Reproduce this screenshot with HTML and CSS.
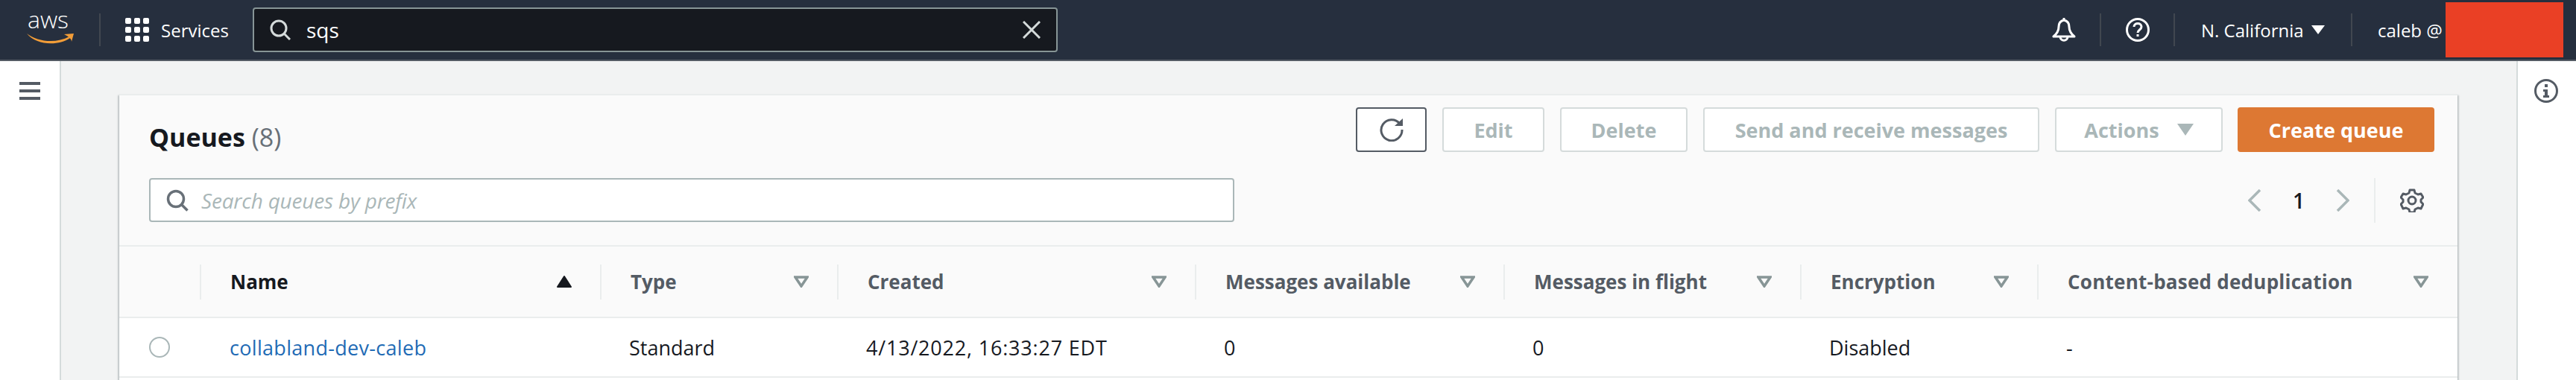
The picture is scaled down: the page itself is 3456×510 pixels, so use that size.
FILE: index.html
```html
<!DOCTYPE html>
<html lang="en">
<head>
    <meta charset="UTF-8">
    <title>Simple Queue Service</title>
    <link rel="stylesheet" href="styles.css">
</head>
<body>
    <header class="topbar">
        <svg class="logo" width="68" height="44" viewBox="0 0 68 44">
            <text x="3" y="20" class="logo-text">aws</text>
            <path d="M2 27C16 38 41 41 59 31L60 33C44 44 15 43 2 27Z" fill="#f29d38"/>
            <path d="M52 28L65 27L62 38C62 35 60 32 52 28Z" fill="#f29d38"/>
        </svg>
        <span class="topbar-sep sep-logo"></span>
        <svg class="services-icon" width="32" height="32" viewBox="0 0 32 32" fill="#fff">
            <rect width="8" height="8" rx="2"/><rect x="12" width="8" height="8" rx="2"/><rect x="24" width="8" height="8" rx="2"/>
            <rect y="12" width="8" height="8" rx="2"/><rect x="12" y="12" width="8" height="8" rx="2"/><rect x="24" y="12" width="8" height="8" rx="2"/>
            <rect y="24" width="8" height="8" rx="2"/><rect x="12" y="24" width="8" height="8" rx="2"/><rect x="24" y="24" width="8" height="8" rx="2"/>
        </svg>
        <span class="services">Services</span>
        <div class="global-search">
            <svg width="28" height="28" viewBox="0 0 28 28" fill="none" stroke="#d5dbdb" stroke-width="3">
                <circle cx="12" cy="12" r="10"/><path d="M19 19l8 8"/>
            </svg>
            <span class="global-query">sqs</span>
            <svg class="clear-icon" width="24" height="24" viewBox="0 0 24 24" fill="none" stroke="#d5dbdb" stroke-width="3">
                <path d="M1 1l22 22M23 1L1 23"/>
            </svg>
        </div>
        <svg class="bell" width="32" height="32" viewBox="0 0 32 32" fill="none" stroke="#fff" stroke-width="3" stroke-linejoin="round">
            <path d="M16 0v3"/>
            <path d="M16 3c-5 1-7 5-7 9 0 5-2 9-7 13h28c-5-4-7-8-7-13 0-4-2-8-7-9z"/>
            <path d="M11 25c0 7 10 7 10 0"/>
        </svg>
        <span class="topbar-sep sep-bell"></span>
        <svg class="help" width="32" height="32" viewBox="0 0 32 32" fill="none" stroke="#fff" stroke-width="3">
            <circle cx="16" cy="16" r="14.5"/>
            <path d="M11 12c0-6 10-6 10 0 0 4-5 4-5 8"/>
            <path d="M16 22v3"/>
        </svg>
        <span class="topbar-sep sep-help"></span>
        <span class="region">N. California</span>
        <span class="region-caret"></span>
        <span class="topbar-sep sep-region"></span>
        <span class="account">caleb @</span>
        <span class="redacted"></span>
    </header>

    <div class="layout">
        <aside class="rail rail-left">
            <span class="burger"><i></i><i></i><i></i></span>
        </aside>

        <main class="content">
            <section class="card">
                <div class="card-top">
                    <div class="title-row">
                        <h2 class="title">Queues <span class="count">(8)</span></h2>
                        <div class="actions">
                            <button class="btn btn-refresh" type="button">
                                <svg width="32" height="32" viewBox="0 0 32 32" fill="none" stroke="#545b64" stroke-width="3">
                                    <path d="M27 8A14 14 0 1 0 30 16"/>
                                    <path d="M31 1v10H20z" fill="#545b64" stroke="none"/>
                                </svg>
                            </button>
                            <button class="btn btn-edit" type="button">Edit</button>
                            <button class="btn btn-delete" type="button">Delete</button>
                            <button class="btn btn-send" type="button">Send and receive messages</button>
                            <button class="btn btn-actions" type="button">Actions <span class="caret"></span></button>
                            <button class="btn btn-create" type="button">Create queue</button>
                        </div>
                    </div>
                    <div class="filter-row">
                        <div class="filter-input">
                            <svg width="30" height="30" viewBox="0 0 30 30" fill="none" stroke="#687078" stroke-width="3.5">
                                <circle cx="13" cy="13" r="10.5"/><path d="M20.5 20.5l8 8"/>
                            </svg>
                            <span class="placeholder">Search queues by prefix</span>
                        </div>
                        <div class="pager">
                            <svg class="chev" width="18" height="30" viewBox="0 0 18 30" fill="none" stroke="#aab7b8" stroke-width="3.5"><path d="M16 1L2 15l14 14"/></svg>
                            <span class="page-num">1</span>
                            <svg class="chev" width="18" height="30" viewBox="0 0 18 30" fill="none" stroke="#aab7b8" stroke-width="3.5"><path d="M2 1l14 14L2 29"/></svg>
                            <span class="pager-sep"></span>
                            <svg width="32" height="32" viewBox="0 0 32 32" fill="none" stroke="#545b64" stroke-width="3" stroke-linejoin="round">
                                <path d="M13 2h6l1 4 4 2 4-1 3 5-3 3v3l3 3-3 6-4-1-4 2-1 4h-6l-1-4-4-2-4 1-3-6 3-3v-3L1 12l3-5 4 1 4-2z"/>
                                <circle cx="16" cy="16" r="5"/>
                            </svg>
                        </div>
                    </div>
                </div>

                <div class="table-head cols">
                    <div class="th-blank"></div>
                    <div class="th th-name"><span>Name</span><svg width="20" height="16" viewBox="0 0 20 16" fill="#16191f" stroke="#16191f" stroke-width="2" stroke-linejoin="round"><path d="M10 1L1 15h18z"/></svg></div>
                    <div class="th"><span>Type</span><svg width="20" height="16" viewBox="0 0 20 16" fill="none" stroke="#879596" stroke-width="3.5"><path d="M2 2h16l-8 12z"/></svg></div>
                    <div class="th"><span>Created</span><svg width="20" height="16" viewBox="0 0 20 16" fill="none" stroke="#879596" stroke-width="3.5"><path d="M2 2h16l-8 12z"/></svg></div>
                    <div class="th"><span>Messages available</span><svg width="20" height="16" viewBox="0 0 20 16" fill="none" stroke="#879596" stroke-width="3.5"><path d="M2 2h16l-8 12z"/></svg></div>
                    <div class="th"><span>Messages in flight</span><svg width="20" height="16" viewBox="0 0 20 16" fill="none" stroke="#879596" stroke-width="3.5"><path d="M2 2h16l-8 12z"/></svg></div>
                    <div class="th"><span>Encryption</span><svg width="20" height="16" viewBox="0 0 20 16" fill="none" stroke="#879596" stroke-width="3.5"><path d="M2 2h16l-8 12z"/></svg></div>
                    <div class="th th-last"><span>Content-based deduplication</span><svg width="20" height="16" viewBox="0 0 20 16" fill="none" stroke="#879596" stroke-width="3.5"><path d="M2 2h16l-8 12z"/></svg></div>
                </div>

                <div class="table-body">
                    <div class="table-row cols">
                        <div class="td-radio"><span class="radio"></span></div>
                        <div class="td td-name"><a class="queue-link" href="#">collabland-dev-caleb</a></div>
                        <div class="td">Standard</div>
                        <div class="td td-date">4/13/2022, 16:33:27 EDT</div>
                        <div class="td">0</div>
                        <div class="td">0</div>
                        <div class="td">Disabled</div>
                        <div class="td">-</div>
                    </div>
                </div>
            </section>
        </main>

        <aside class="rail rail-right">
            <svg width="32" height="32" viewBox="0 0 32 32" fill="none" stroke="#545b64" stroke-width="3">
                <circle cx="16" cy="16" r="14.5"/>
                <path d="M14 7h4v4h-4zM12 14h6v8h2v3h-8v-3h2v-5h-2z" fill="#545b64" stroke="none"/>
            </svg>
        </aside>
    </div>
</body>
</html>
```

FILE: styles.css
```css
* {
    box-sizing: border-box;
}

html, body {
    height: 100%;
}

body {
    margin: 0;
    display: flex;
    flex-direction: column;
    overflow: hidden;
    font-family: "Open Sans", "Liberation Sans", sans-serif;
    font-size: 26px;
    color: #16191f;
    background-color: #f2f3f3;
}

/* top navigation */
.topbar {
    flex: none;
    display: flex;
    align-items: center;
    height: 82px;
    border-bottom: 2px solid #545b64;
    background-color: #262f3e;
    color: #fff;
}

.logo {
    margin: 0 0 0 34px;
    flex: none;
    overflow: visible;
}

.logo-text {
    font-family: "Open Sans", sans-serif;
    font-weight: 300;
    font-size: 32px;
    fill: #fff;
}

.topbar-sep {
    flex: none;
    width: 2px;
    height: 44px;
    background-color: #414750;
}

.sep-logo {
    margin-left: 31px;
}

.services-icon {
    margin-left: 33px;
    flex: none;
}

.services {
    margin-left: 16px;
    width: 92px;
    font-size: 24px;
}

.global-search {
    display: flex;
    align-items: center;
    width: 1080px;
    height: 60px;
    margin-left: 31px;
    padding: 0 21px;
    border: 2px solid #879596;
    border-radius: 4px;
    background-color: #16191f;
}

.global-query {
    margin-left: 21px;
    font-size: 28px;
    color: #fff;
}

.clear-icon {
    margin-left: auto;
}

.bell {
    margin-left: 1334px;
    flex: none;
}

.sep-bell {
    margin-left: 32px;
}

.help {
    margin-left: 33px;
    flex: none;
}

.sep-help {
    margin-left: 32px;
}

.region {
    margin-left: 35px;
    width: 148px;
    font-size: 24px;
    white-space: nowrap;
}

.region-caret {
    width: 0;
    height: 0;
    border-left: 9px solid transparent;
    border-right: 9px solid transparent;
    border-top: 12px solid #fff;
}

.sep-region {
    margin-left: 35px;
}

.account {
    margin-left: 34px;
    width: 91px;
    font-size: 24px;
    white-space: nowrap;
}

.redacted {
    width: 158px;
    height: 74px;
    background-color: #ea4025;
}

/* page body */
.layout {
    flex: 1;
    display: flex;
    min-height: 0;
}

.rail {
    flex: none;
    background-color: #fff;
}

.rail-left {
    width: 82px;
    padding: 28px 0 0 26px;
    border-right: 2px solid #d5dbdb;
}

.rail-right {
    width: 80px;
    padding: 24px 0 0 22px;
    border-left: 2px solid #d5dbdb;
}

.burger {
    display: flex;
    flex-direction: column;
    gap: 6px;
    width: 28px;
}

.burger i {
    height: 4px;
    background-color: #545b64;
}

.content {
    flex: 1;
    min-width: 0;
    padding: 44px 79px 0 78px;
}

.card {
    display: flex;
    flex-direction: column;
    height: 100%;
    background-color: #fafafa;
    border-top: 2px solid #eaeded;
    box-shadow: 0 2px 2px rgba(0, 28, 36, 0.3), 2px 2px 2px rgba(0, 28, 36, 0.15), -2px 2px 2px rgba(0, 28, 36, 0.15);
}

.card-top {
    flex: none;
    padding: 16px 31px 30px 40px;
}

.title-row {
    display: flex;
    align-items: flex-start;
    justify-content: space-between;
}

.title {
    margin: 18px 0 0;
    font-size: 34px;
    line-height: 44px;
    font-weight: 700;
}

.count {
    font-weight: 400;
    color: #687078;
}

.actions {
    display: flex;
    gap: 21px;
}

.btn {
    display: flex;
    align-items: center;
    justify-content: center;
    height: 60px;
    padding: 0;
    border: 2px solid #d5dbdb;
    border-radius: 4px;
    background-color: #fff;
    font-family: inherit;
    font-size: 27px;
    font-weight: 700;
    color: #aab7b8;
}

.btn-refresh {
    width: 95px;
    border-color: #545b64;
}

.btn-edit {
    width: 137px;
}

.btn-delete {
    width: 171px;
}

.btn-send {
    width: 451px;
}

.btn-actions {
    width: 225px;
    gap: 24px;
}

.caret {
    width: 0;
    height: 0;
    border-left: 11px solid transparent;
    border-right: 11px solid transparent;
    border-top: 16px solid #aab7b8;
}

.btn-create {
    width: 264px;
    margin-left: -1px;
    border-color: #dd7833;
    background-color: #dd7833;
    color: #fff;
}

.filter-row {
    display: flex;
    align-items: flex-start;
    justify-content: space-between;
    margin-top: 33px;
}

.filter-input {
    display: flex;
    align-items: center;
    gap: 17px;
    width: 1456px;
    height: 59px;
    padding-left: 21px;
    border: 2px solid #aab7b8;
    border-radius: 4px;
    background-color: #fff;
    font-size: 28px;
}

.placeholder {
    font-style: italic;
    letter-spacing: -0.2px;
    color: #aab7b8;
}

.pager {
    display: flex;
    align-items: center;
}

.page-num {
    width: 100px;
    text-align: center;
    font-size: 28px;
    font-weight: 600;
}

.pager-sep {
    width: 2px;
    height: 60px;
    margin: 0 33px 0 33px;
    background-color: #eaeded;
}

.pager svg:last-child {
    margin-right: 14px;
}

/* table */
.cols {
    display: grid;
    grid-template-columns: 108px 537px 318px 480px 414px 398px 318px 564px;
    align-items: center;
}

.table-head {
    flex: none;
    height: 98px;
    border-top: 2px solid #eaeded;
    border-bottom: 2px solid #eaeded;
}

.th {
    display: flex;
    align-items: center;
    justify-content: space-between;
    height: 47px;
    padding: 0 38px 0 39px;
    border-left: 2px solid #eaeded;
    font-weight: 700;
    color: #545b64;
}

.th-name {
    color: #16191f;
}

.th-last {
    padding-right: 39px;
    letter-spacing: 0.25px;
}

.table-body {
    flex: 1;
    background-color: #fff;
}

.table-row {
    height: 80px;
    border-bottom: 2px solid #eaeded;
    font-size: 27px;
}

.td-radio {
    padding-left: 40px;
}

.radio {
    display: block;
    width: 28px;
    height: 28px;
    border: 2px solid #aab7b8;
    border-radius: 50%;
}

.td {
    padding-left: 39px;
}

.td-name {
    padding-left: 40px;
    letter-spacing: 0.3px;
}

.td-date {
    letter-spacing: 0.8px;
}

.queue-link {
    color: #1f6bb5;
    text-decoration: none;
}
```
